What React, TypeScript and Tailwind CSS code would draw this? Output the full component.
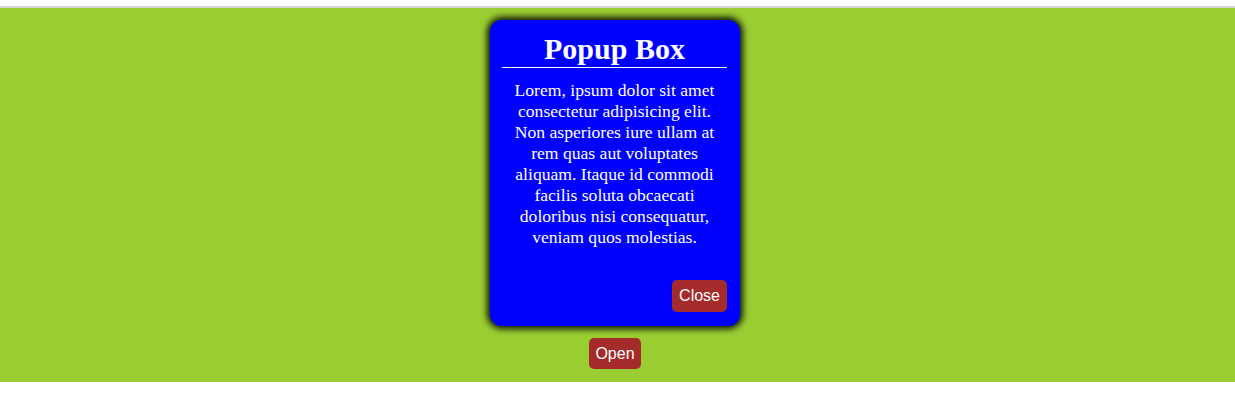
export default function App() {
  return (
    <div className="min-h-[415px] bg-white">
      <div className="h-[6px]" />
      <div className="h-[2px] bg-[#d3d3d3]" />
      <div className="flex flex-col items-center bg-[#9acd32] pr-[5px] pt-[12px] pb-[13px]">
        <div className="flex h-[306px] w-[250px] flex-col rounded-[12px] bg-[#0000ff] pl-[12px] pr-[13px] pt-[12px] pb-[14px] text-white shadow-[0_0_6px_3px_rgba(0,0,0,0.9)] [font-family:'Liberation_Serif',serif]">
          <h2 className="text-center text-[30px] font-bold leading-[34.5px]">Popup Box</h2>
          <div className="h-px bg-white" />
          <p className="mt-[12.5px] text-center text-[17.6px] leading-[21px]">
            Lorem, ipsum dolor sit amet consectetur adipisicing elit. Non asperiores iure
            ullam at rem quas aut voluptates aliquam. Itaque id commodi facilis soluta
            obcaecati doloribus nisi consequatur, veniam quos molestias.
          </p>
          <div className="mt-auto flex justify-end">
            <button className="rounded-[5px] bg-[#a52a2a] px-[7px] py-[7px] text-[16px] leading-[18px] text-white [font-family:'Liberation_Sans',sans-serif]">
              Close
            </button>
          </div>
        </div>
        <button className="mt-[12px] rounded-[5px] bg-[#a52a2a] px-[6.5px] py-[6.5px] text-[16px] leading-[18px] text-white [font-family:'Liberation_Sans',sans-serif]">
          Open
        </button>
      </div>
    </div>
  );
}
